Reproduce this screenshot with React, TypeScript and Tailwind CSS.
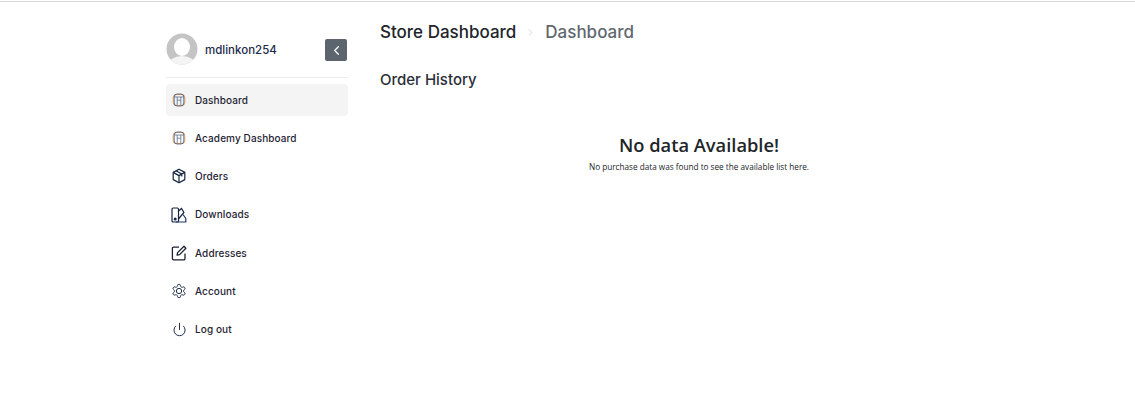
import type { ReactNode } from "react";
import { ChevronLeft, ChevronRight, Power } from "lucide-react";

const poppins = "font-['Inter','Liberation_Sans',sans-serif]";

function CubeIcon() {
  return (
    <svg width="14" height="14" viewBox="0 0 14 14" fill="none">
      <rect x="1.2" y="1.5" width="11.6" height="11" rx="3" stroke="#e8a35c" strokeWidth="1" />
      <path d="M2.5 4h9M5.2 4v8M8.8 4v8M5.2 7.2h3.6" stroke="#5d6f8f" strokeWidth="0.8" />
      <rect x="2.2" y="1" width="9.6" height="12" rx="3" stroke="#27406b" strokeWidth="0.7" />
    </svg>
  );
}

function OrdersIcon() {
  return (
    <svg width="16" height="16" viewBox="0 0 16 16" fill="none" stroke="#14233f" strokeWidth="1.2" strokeLinejoin="round">
      <path d="M8 1.2l5.8 3.2v7.2L8 14.8l-5.8-3.2V4.4z" />
      <path d="M2.2 4.4L8 7.6l5.8-3.2M8 7.6v7.2M5 2.8l5.8 3.3v2.4" />
    </svg>
  );
}

function DownloadsIcon() {
  return (
    <svg width="16" height="16" viewBox="0 0 16 16" fill="none" stroke="#14233f" strokeWidth="1.2">
      <rect x="1" y="1" width="6.5" height="14" rx="1.2" />
      <path d="M7.5 4l3-2.5 2.4 4-5.4 6.5" />
      <path d="M5 15h9.8v-3.5l-2.8-4" stroke="#1d3a66" />
      <circle cx="4.2" cy="12" r="0.9" fill="#14233f" />
    </svg>
  );
}

function EditIcon() {
  return (
    <svg width="16" height="16" viewBox="0 0 16 16" fill="none" stroke="#1c2333" strokeWidth="1.3" strokeLinejoin="round">
      <path d="M8 2.2H2.6a1.2 1.2 0 0 0-1.2 1.2v10.2a1.2 1.2 0 0 0 1.2 1.2h10.2a1.2 1.2 0 0 0 1.2-1.2V8.5" />
      <path d="M13 1.3l1.9 1.9L8.6 9.6l-2.5.5.5-2.5z" />
    </svg>
  );
}

function GearIcon() {
  return (
    <svg width="16" height="16" viewBox="0 0 24 24" fill="none" stroke="#14233f" strokeWidth="1.4" strokeLinejoin="round">
      <path d="M12.22 2h-.44a2 2 0 0 0-2 2v.18a2 2 0 0 1-1 1.73l-.43.25a2 2 0 0 1-2 0l-.15-.08a2 2 0 0 0-2.73.73l-.22.38a2 2 0 0 0 .73 2.73l.15.1a2 2 0 0 1 1 1.72v.51a2 2 0 0 1-1 1.74l-.15.09a2 2 0 0 0-.73 2.73l.22.38a2 2 0 0 0 2.73.73l.15-.08a2 2 0 0 1 2 0l.43.25a2 2 0 0 1 1 1.73V20a2 2 0 0 0 2 2h.44a2 2 0 0 0 2-2v-.18a2 2 0 0 1 1-1.73l.43-.25a2 2 0 0 1 2 0l.15.08a2 2 0 0 0 2.73-.73l.22-.39a2 2 0 0 0-.73-2.73l-.15-.08a2 2 0 0 1-1-1.74v-.5a2 2 0 0 1 1-1.74l.15-.09a2 2 0 0 0 .73-2.73l-.22-.38a2 2 0 0 0-2.73-.73l-.15.08a2 2 0 0 1-2 0l-.43-.25a2 2 0 0 1-1-1.73V4a2 2 0 0 0-2-2z" />
      <circle cx="12" cy="12" r="4" />
    </svg>
  );
}

function Avatar() {
  return (
    <svg width="32" height="32" viewBox="0 0 32 32" className="shrink-0">
      <clipPath id="avatar-clip">
        <circle cx="16" cy="16" r="15.5" />
      </clipPath>
      <g clipPath="url(#avatar-clip)">
        <rect width="32" height="32" fill="#c4c4c4" />
        <ellipse cx="16" cy="14" rx="8" ry="9" fill="#fff" />
        <ellipse cx="16" cy="32" rx="14" ry="9" fill="#f4f4f4" />
      </g>
    </svg>
  );
}

const menuItems: { label: string; icon: ReactNode; active?: boolean }[] = [
  { label: "Dashboard", icon: <CubeIcon />, active: true },
  { label: "Academy Dashboard", icon: <CubeIcon /> },
  { label: "Orders", icon: <OrdersIcon /> },
  { label: "Downloads", icon: <DownloadsIcon /> },
  { label: "Addresses", icon: <EditIcon /> },
  { label: "Account", icon: <GearIcon /> },
  { label: "Log out", icon: <Power size={15} strokeWidth={1.5} color="#14233f" /> },
];

export default function App() {
  return (
    <main className="min-h-[419px] bg-white pt-px">
      <div className="h-px bg-[#d9d9d9]" />
      <div className="flex pl-[166px]">
        <aside className={`w-[182px] shrink-0 pt-[31px] ${poppins}`}>
          <div className="flex h-[45px] items-start justify-between border-b border-[#ececec] pr-px">
            <div className="flex items-center gap-[7px]">
              <Avatar />
              <span className="mt-[4px] text-[11.5px] font-medium text-[#1d2b4a]">mdlinkon254</span>
            </div>
            <button className="mt-[6px] flex h-[22px] w-[22px] items-center justify-center rounded-[2px] bg-[#5c656e] text-white">
              <ChevronLeft size={15} strokeWidth={2} />
            </button>
          </div>
          <nav className="mt-[6px]">
            {menuItems.map((item) => (
              <a
                key={item.label}
                className={`flex items-center gap-[8px] rounded-[4px] pl-[5px] text-[10px] font-medium tracking-[0.01em] text-[#1f2433] ${
                  item.active ? "mb-[3px] h-8 bg-[#f4f4f4]" : "h-[38.3px]"
                }`}
              >
                <span className="flex w-4 items-center justify-center">{item.icon}</span>
                {item.label}
              </a>
            ))}
          </nav>
        </aside>

        <section className={`flex-1 pl-[32px] pr-[18px] pt-[19px] ${poppins}`}>
          <div className="flex items-center text-[17px] font-medium leading-[22px] text-[#212529]">
            Store Dashboard
            <ChevronRight size={11} strokeWidth={1.5} color="#c4c4c4" className="mx-[9px]" />
            <span className="text-[#5f6870]">Dashboard</span>
          </div>
          <h2 className="mt-[25px] text-[15px] font-medium leading-[24px] text-[#2a2e38]">Order History</h2>
          <div className="mt-[40px] pr-[99px] text-center font-['Open_Sans','Noto_Sans',sans-serif]">
            <p className="text-[18.3px] font-semibold leading-[25px] text-[#212529]">No data Available!</p>
            <p className="mt-[4px] text-[8.2px] leading-[12px] text-[#212529]">
              No purchase data was found to see the available list here.
            </p>
          </div>
        </section>
      </div>
    </main>
  );
}
